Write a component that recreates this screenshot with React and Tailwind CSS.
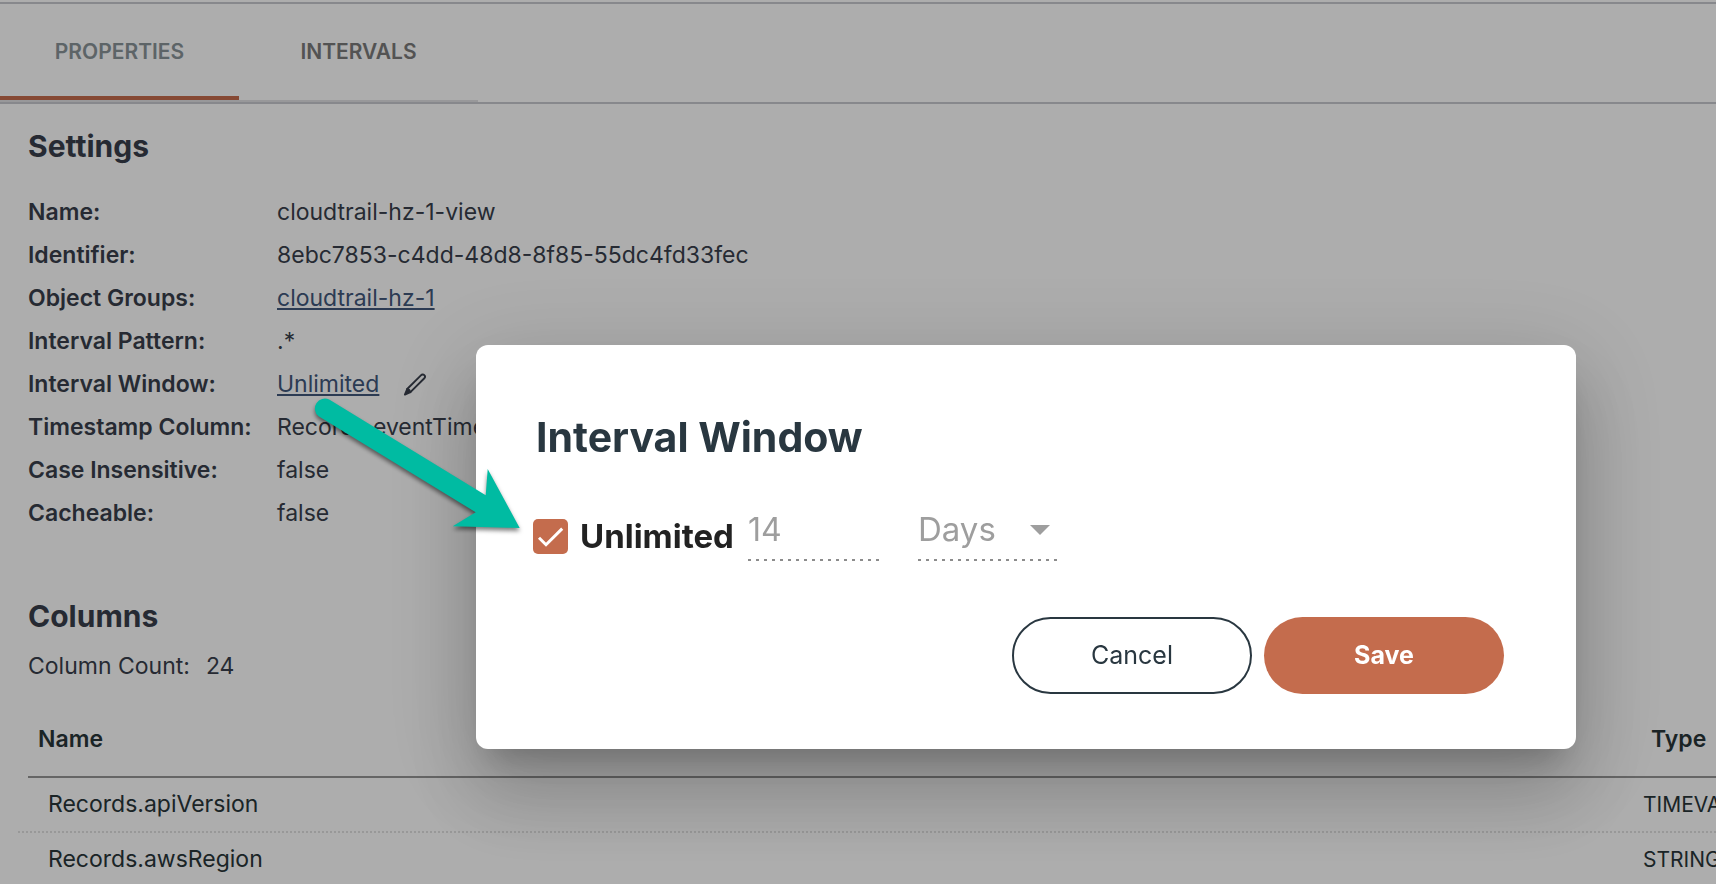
import React from "react";

const settings = [
  { label: "Name:", value: "cloudtrail-hz-1-view" },
  { label: "Identifier:", value: "8ebc7853-c4dd-48d8-8f85-55dc4fd33fec" },
  { label: "Object Groups:", value: "cloudtrail-hz-1", link: true },
  { label: "Interval Pattern:", value: ".*" },
  { label: "Interval Window:", value: "Unlimited", link: true, editable: true },
  { label: "Timestamp Column:", value: "Records.eventTime" },
  { label: "Case Insensitive:", value: "false" },
  { label: "Cacheable:", value: "false" },
];

const columns = [
  { name: "Records.apiVersion", type: "TIMEVAL" },
  { name: "Records.awsRegion", type: "STRING" },
];

function PencilIcon() {
  return (
    <svg viewBox="0 0 24 24" className="size-6" fill="none" stroke="currentColor" strokeWidth="1.9" strokeLinejoin="round" strokeLinecap="round" aria-hidden="true">
      <path d="M4.2 16 17.9 2.3c1-1 2.5-1.1 3.4-.2s.8 2.4-.2 3.4L7.4 19.2" />
      <path d="M4.2 16 1.9 21.6 7.4 19.2C7 17.5 5.9 16.4 4.2 16z" fill="currentColor" />
    </svg>
  );
}

function Tabs() {
  return (
    <nav className="mt-0.5 flex h-[102px] border-y-2 border-[#c8c9cf] text-[21px] font-semibold">
      <div role="tablist" className="grid w-[478px] grid-cols-2">
        <button role="tab" aria-selected="true" className="border-b-2 border-[#e0e0e4] text-[#8a9499]">
          <span className="flex h-full items-center justify-center border-b-4 border-[#c66c4d] pt-1">PROPERTIES</span>
        </button>
        <button role="tab" aria-selected="false" className="border-b-2 border-[#e0e0e4] text-[#7b7b7b]">
          INTERVALS
        </button>
      </div>
    </nav>
  );
}

function Settings() {
  return (
    <section className="px-7 pt-5">
      <h2 className="text-[30px] leading-[44px] font-bold">Settings</h2>
      <dl className="mt-[23px] text-[23px] leading-[43px]">
        {settings.map((s) => (
          <div key={s.label} className="grid grid-cols-[249px_1fr]">
            <dt className="font-semibold whitespace-nowrap">{s.label}</dt>
            <dd className="flex items-center gap-6">
              {s.link ? (
                <a href="#" className="text-[#41577b] underline decoration-2 underline-offset-2">{s.value}</a>
              ) : (
                s.value
              )}
              {s.editable && (
                <button aria-label="Edit interval window">
                  <PencilIcon />
                </button>
              )}
            </dd>
          </div>
        ))}
      </dl>
    </section>
  );
}

function Columns() {
  return (
    <section className="pt-[59px]">
      <h2 className="px-7 text-[30px] leading-[44px] font-bold">Columns</h2>
      <p className="flex gap-4 px-7 pt-3 text-[23px] leading-8">
        <span>Column Count:</span>
        <span>24</span>
      </p>
      <table className="mt-5 block pl-[18px] text-[23px] text-[#293539]">
        <thead className="block">
          <tr className="ml-2.5 flex h-[76px] items-center border-b-2 border-[#969696] pl-2.5">
            <th className="flex-1 text-left font-semibold">Name</th>
            <th className="w-[65px] text-left font-semibold">Type</th>
          </tr>
        </thead>
        <tbody className="block">
          {columns.map((c) => (
            <tr key={c.name} className="flex h-[55px] items-center border-b-2 border-dotted border-[#e0e0e0] pl-[30px]">
              <td className="flex-1">{c.name}</td>
              <td className="w-[73px] text-[21px] whitespace-nowrap">{c.type}</td>
            </tr>
          ))}
        </tbody>
      </table>
    </section>
  );
}

function IntervalDialog() {
  return (
    <div className="fixed inset-0 flex items-start bg-black/32 pt-[345px] pr-[140px] pl-[476px]">
      <div
        role="dialog"
        aria-labelledby="dialog-title"
        className="w-full rounded-xl bg-white pt-[68px] pr-[72px] pb-[55px] pl-[60px] shadow-[0_22px_30px_-14px_rgba(0,0,0,0.2),0_48px_76px_6px_rgba(0,0,0,0.14),0_18px_92px_16px_rgba(0,0,0,0.12)]"
      >
        <h1 id="dialog-title" className="text-[41px] leading-[48px] font-bold text-[#293740]">
          Interval Window
        </h1>
        <form>
          <div className="mt-11 flex h-14 items-start text-[32px] leading-[48px]">
            <label className="-ml-[3px] flex items-center gap-3 pt-[7px] font-bold text-[#222]">
              <span className="relative flex size-[35px]">
                <input type="checkbox" defaultChecked className="size-full appearance-none rounded-[5px] bg-[#c46c4d]" />
                <svg viewBox="0 0 35 35" className="pointer-events-none absolute inset-0" fill="none" stroke="#fff" strokeWidth="3" aria-hidden="true">
                  <path d="M6 18.8 13 25.7 29.2 9.6" />
                </svg>
              </span>
              <span className="w-[168px] text-[33px]">Unlimited</span>
            </label>
            <input
              aria-label="Interval length"
              type="text"
              disabled
              defaultValue="14"
              className="h-14 w-[132px] bg-[repeating-linear-gradient(to_right,#8c8c8c_0_3px,transparent_3px_8px)] bg-[length:100%_2px] bg-bottom bg-no-repeat pb-2 text-[#9e9e9e]"
            />
            <span className="relative ml-[38px] w-[140px]">
              <select
                aria-label="Interval unit"
                disabled
                className="h-14 w-full appearance-none bg-[repeating-linear-gradient(to_right,#8c8c8c_0_3px,transparent_3px_8px)] bg-[length:100%_2px] bg-bottom bg-no-repeat pb-2 text-[33px] text-[#9e9e9e] opacity-100"
              >
                <option>Days</option>
              </select>
              <svg viewBox="0 0 20 10" className="pointer-events-none absolute top-5 right-2 h-2.5 w-5" fill="#9e9e9e" aria-hidden="true">
                <path d="M0 0h20L10 10z" />
              </svg>
            </span>
          </div>
          <div className="mt-14 flex justify-end gap-3 text-[25px]">
            <button type="button" className="h-[77px] w-[240px] rounded-full border-2 border-[#293740] text-[#293740]">
              Cancel
            </button>
            <button type="button" className="h-[77px] w-[240px] rounded-full bg-[#c46c4d] font-bold text-white">
              Save
            </button>
          </div>
        </form>
      </div>
      <svg
        viewBox="0 0 220 150"
        className="pointer-events-none absolute top-[390px] left-[306px] h-[150px] w-[220px] overflow-visible drop-shadow-[0_3px_2px_rgba(0,0,0,0.5)]"
        fill="#00bba2"
        aria-hidden="true"
      >
        <path d="M23.2 9.5 179.7 105.3 181.7 79 213.7 138 146.7 136.3 169.7 122.3 12.6 26.3A10 10 0 0 1 23.2 9.5z" />
      </svg>
    </div>
  );
}

export default function App() {
  return (
    <div className="h-screen overflow-hidden bg-white font-[Inter,sans-serif] text-[#393f4c]">
      <Tabs />
      <Settings />
      <Columns />
      <IntervalDialog />
    </div>
  );
}
